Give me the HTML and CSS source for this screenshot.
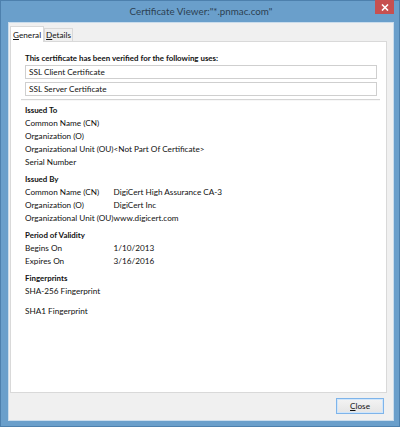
FILE: index.html
```html
<!DOCTYPE html>
<html lang="en">
<head>
    <meta charset="UTF-8">
    <title>Certificate Viewer</title>
    <link rel="stylesheet" href="styles.css">
</head>
<body>
    <div class="window">
        <div class="titlebar">
            <div class="title">Certificate Viewer:"*.pnmac.com"</div>
            <div class="close-x">
                <svg width="8" height="7" viewBox="0 0 8 7"><path d="M1 0.5 L7 6.5 M7 0.5 L1 6.5" stroke="#fff" stroke-width="1.6"/></svg>
            </div>
        </div>
        <div class="client">
            <div class="tabs">
                <div class="tab active"><u>G</u>eneral</div>
                <div class="tab"><u>D</u>etails</div>
            </div>
            <div class="panel">
                <div class="uses-title">This certificate has been verified for the following uses:</div>
                <div class="use-box">SSL Client Certificate</div>
                <div class="use-box">SSL Server Certificate</div>
                <div class="separator"></div>

                <div class="fields">
                    <div class="section-title first">Issued To</div>
                    <span class="label">Common Name (CN)</span><span class="value"></span>
                    <span class="label">Organization (O)</span><span class="value"></span>
                    <span class="label">Organizational Unit (OU)</span><span class="value">&lt;Not Part Of Certificate&gt;</span>
                    <span class="label">Serial Number</span><span class="value"></span>

                    <div class="section-title">Issued By</div>
                    <span class="label">Common Name (CN)</span><span class="value">DigiCert High Assurance CA-3</span>
                    <span class="label">Organization (O)</span><span class="value">DigiCert Inc</span>
                    <span class="label">Organizational Unit (OU)</span><span class="value">www.digicert.com</span>

                    <div class="section-title">Period of Validity</div>
                    <span class="label">Begins On</span><span class="value">1/10/2013</span>
                    <span class="label">Expires On</span><span class="value">3/16/2016</span>

                    <div class="section-title">Fingerprints</div>
                    <span class="label fp">SHA-256 Fingerprint</span>
                    <span class="label fp">SHA1 Fingerprint</span>
                </div>
            </div>
            <div class="footer">
                <button class="close-btn"><u>C</u>lose</button>
            </div>
        </div>
    </div>
</body>
</html>
```

FILE: styles.css
```css
html, body {
    margin: 0;
    padding: 0;
    width: 400px;
    height: 427px;
    overflow: hidden;
    font-family: Lato, "Liberation Sans", Arial, sans-serif;
    font-size: 8.2px;
    color: #111;
}
.window {
    width: 400px;
    height: 427px;
    box-sizing: border-box;
    background-color: #6a9fcb;
    border: 1px solid #4d80ad;
    padding: 0 5px 5px 7px;
    display: flex;
    flex-direction: column;
}
.titlebar {
    height: 21px;
    display: flex;
    justify-content: center;
    align-items: center;
    position: relative;
}
.title {
    font-size: 9.8px;
    color: #2c3f52;
    margin-top: -1px;
}
.close-x {
    position: absolute;
    right: 0;
    top: -1px;
    width: 19px;
    height: 14px;
    background-color: #c75050;
    display: flex;
    justify-content: center;
    align-items: center;
}
.client {
    flex: 1;
    background-color: #f0f0f0;
    border: 1px solid #c9dcec;
    padding: 2px 6px 0 1px;
    display: flex;
    flex-direction: column;
}
.tabs {
    display: flex;
    align-items: flex-end;
    height: 16px;
    position: relative;
    z-index: 1;
}
.tab {
    border: 1px solid #d9d9d9;
    border-bottom: none;
    background-color: #f0f0f0;
    padding: 0 1px;
    height: 12px;
    line-height: 12px;
}
.tab.active {
    background-color: #fff;
    height: 15px;
    line-height: 16px;
    padding: 0 2px;
    margin-bottom: -1px;
}
.panel {
    height: 352px;
    box-sizing: border-box;
    background-color: #fff;
    border: 1px solid #d9d9d9;
    padding: 9px 9px 0 14px;
}
.uses-title {
    font-weight: bold;
    font-size: 7.9px;
    line-height: 14px;
}
.use-box {
    height: 14px;
    box-sizing: border-box;
    border: 1px solid #cfcfcf;
    line-height: 12px;
    padding-left: 3px;
    margin-bottom: 3px;
}
.separator {
    height: 0;
    border-top: 1px solid #d5d5d5;
    border-bottom: 1px solid #f7f7f7;
    margin: 2px -3px 3px -4px;
}
.fields {
    display: grid;
    grid-template-columns: max-content 1fr;
    column-gap: 0;
    line-height: 13px;
    white-space: nowrap;
}
.section-title {
    grid-column: 1 / -1;
    font-weight: bold;
    font-size: 7.9px;
    margin-top: 4px;
}
.section-title.first {
    margin-top: 0;
}
.label.fp {
    grid-column: 1 / -1;
    margin-bottom: 7px;
}
.footer {
    flex: 1;
    display: flex;
    justify-content: flex-end;
    align-items: flex-start;
    padding-top: 5px;
}
.close-btn {
    width: 48px;
    height: 16px;
    font-family: Lato, "Liberation Sans", Arial, sans-serif;
    font-size: 8.2px;
    color: #111;
    background: linear-gradient(#f3f3f3, #e5e5e5);
    border: 1px solid #7eb4ea;
    box-shadow: inset 0 0 0 1px #d0e6fb;
    padding: 0;
    margin-right: 3px;
}
```
